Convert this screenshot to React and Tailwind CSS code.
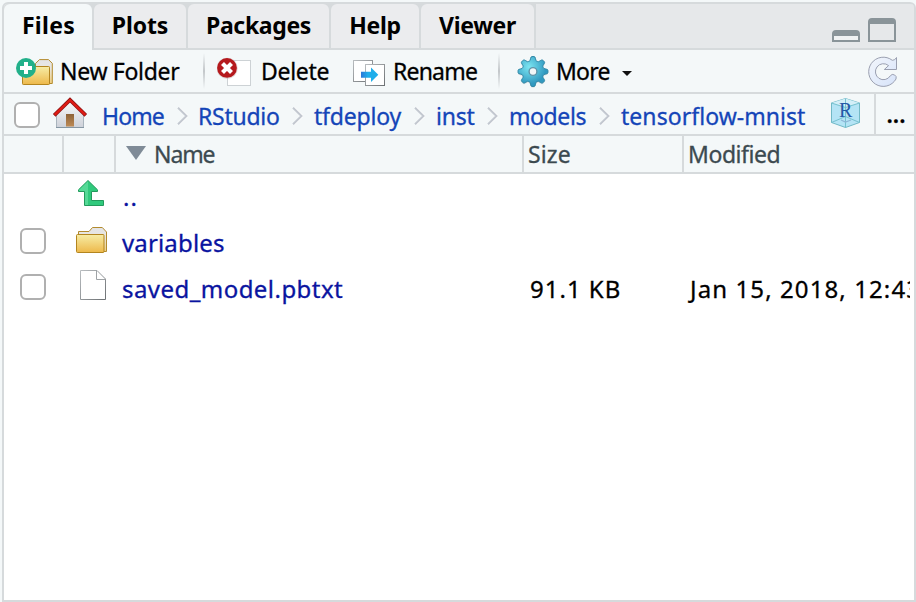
function Tab({ width, active, className = "", children }) {
  return (
    <div
      className={`flex items-center justify-center rounded-t-md text-center font-bold ${
        active ? "h-[46px] bg-[#f4f8f9] pb-1" : "h-11 bg-[#ebecee] pb-0.5"
      } ${width} ${className}`}
    >
      {children}
    </div>
  );
}

function Separator({ className = "" }) {
  return (
    <div
      className={`h-9 w-0.5 shrink-0 bg-gradient-to-b from-[#f4f8f9] via-[#c3c7ca] to-[#f4f8f9] ${className}`}
    />
  );
}

function Checkbox({ className = "" }) {
  return (
    <div
      className={`size-[26px] shrink-0 rounded-[6px] border-2 border-[#b0b0b0] bg-white ${className}`}
    />
  );
}

function Gradients() {
  return (
    <svg width="0" height="0" className="absolute" aria-hidden="true">
      <defs>
        <linearGradient id="folder" x1="0" y1="0" x2="0" y2="1">
          <stop offset="0" stopColor="#f7eda6" />
          <stop offset="1" stopColor="#edb84a" />
        </linearGradient>
        <linearGradient id="folderBack" x1="0" y1="0" x2="0" y2="1">
          <stop offset="0" stopColor="#e4e4e6" />
          <stop offset="0.35" stopColor="#e8e6e2" />
          <stop offset="1" stopColor="#f0cf80" />
        </linearGradient>
        <linearGradient id="page" x1="0" y1="0" x2="1" y2="1">
          <stop offset="0" stopColor="#b9bdc0" />
          <stop offset="1" stopColor="#6d7174" />
        </linearGradient>
        <radialGradient id="gear" gradientUnits="userSpaceOnUse" cx="528" cy="67" r="17">
          <stop offset="0" stopColor="#7de6f2" />
          <stop offset="1" stopColor="#3199c0" />
        </radialGradient>
        <linearGradient id="rename" x1="0" y1="0" x2="1" y2="0">
          <stop offset="0" stopColor="#2b78d8" />
          <stop offset="0.4" stopColor="#20aeea" />
          <stop offset="1" stopColor="#20aeea" />
        </linearGradient>
        <linearGradient id="refresh" x1="0" y1="0" x2="1" y2="1">
          <stop offset="0" stopColor="#f3f6fb" />
          <stop offset="1" stopColor="#d6e3fa" />
        </linearGradient>
        <linearGradient id="wall" x1="0" y1="0" x2="0" y2="1">
          <stop offset="0" stopColor="#fafafa" />
          <stop offset="1" stopColor="#cdd1d9" />
        </linearGradient>
        <linearGradient id="door" x1="0" y1="0" x2="0" y2="1">
          <stop offset="0" stopColor="#8d6238" />
          <stop offset="1" stopColor="#bd8a55" />
        </linearGradient>
      </defs>
    </svg>
  );
}

function NewFolderIcon() {
  return (
    <svg className="ml-3 shrink-0" width="38" height="42" viewBox="16 50 38 42">
      <path d="M35.5 66V63.5L39.5 59.6H48.5L52.3 63.3V83.5H35.5Z" fill="url(#folderBack)" stroke="#b38b2e" />
      <rect x="22.5" y="66.5" width="27" height="18" rx="0.8" fill="url(#folder)" stroke="#b3851f" />
      <circle cx="26" cy="68" r="10" fill="#22b08a" />
      <path d="M26 62V74M20 68H32" stroke="#fff" strokeWidth="4" />
    </svg>
  );
}

function DeleteIcon() {
  return (
    <svg className="ml-3 shrink-0" width="35" height="42" viewBox="217 50 35 42">
      <rect x="227.5" y="60.5" width="23" height="25" fill="#fff" stroke="#cdd2d5" />
      <circle cx="227.2" cy="68.3" r="10.6" fill="#c9b5b5" opacity="0.5" />
      <circle cx="227" cy="67.9" r="9.9" fill="#b5191d" />
      <path d="M222.5 63.5L231.5 72.5M231.5 63.5L222.5 72.5" stroke="#fff" strokeWidth="4.2" />
    </svg>
  );
}

function RenameIcon() {
  return (
    <svg className="shrink-0" width="33" height="42" viewBox="353 50 33 42">
      <rect x="353.5" y="60.5" width="19" height="21" fill="#fff" stroke="url(#page)" />
      <rect x="365.5" y="64.5" width="19" height="21" fill="#fff" stroke="url(#page)" />
      <path d="M361 71.7H371V67.5L378.3 74.7L371 82V77.8H361Z" fill="url(#rename)" />
    </svg>
  );
}

/* Outline of an eight-toothed wheel with softly rounded teeth. */
function gearPath(cx, cy, outer, inner) {
  const points = [];
  for (let i = 0; i < 96; i++) {
    const a = (i / 96) * Math.PI * 2;
    const wave = Math.tanh(2.2 * Math.cos(8 * a)) / Math.tanh(2.2);
    const r = (outer + inner) / 2 + ((outer - inner) / 2) * wave;
    points.push(`${(cx + r * Math.sin(a)).toFixed(2)} ${(cy - r * Math.cos(a)).toFixed(2)}`);
  }
  return `M${points.join("L")}Z`;
}

function GearIcon() {
  return (
    <svg className="ml-[17px] shrink-0" width="32" height="42" viewBox="516 50 32 42">
      <path d={gearPath(532, 72.6, 15, 11)} fill="#b9c6cc" opacity="0.6" />
      <path d={gearPath(532, 71.5, 15, 11)} fill="url(#gear)" stroke="#2f87a6" strokeLinejoin="round" />
      <circle cx="532" cy="71.5" r="3.9" fill="#f1f6f8" stroke="#5f93a8" strokeWidth="1.4" />
    </svg>
  );
}

function RefreshIcon() {
  return (
    <svg className="mr-4 ml-auto shrink-0" width="30" height="42" viewBox="868 50 30 42">
      <path
        d="M896.5 57.5V69.5H884.3L888.6 65.6A8 8 0 1 0 890.3 75.8A3.3 3.3 0 0 1 896 79A14.6 14.6 0 1 1 892.3 60.3Q895 60.5 896.5 57.5Z"
        fill="url(#refresh)"
        stroke="#9a9fb0"
      />
    </svg>
  );
}

function HomeIcon() {
  return (
    <svg className="ml-3 shrink-0" width="36" height="40" viewBox="52 94 36 40">
      <path d="M56.5 114L70 101L83.5 114V127.5H56.5Z" fill="url(#wall)" stroke="#a9b4bd" />
      <path d="M56 127.5H84" stroke="#8596a3" />
      <rect x="66" y="114" width="8" height="12.5" fill="url(#door)" />
      <path d="M54.2 115.3L70 100L85.8 115.3" fill="none" stroke="#8e1414" strokeWidth="3.8" />
      <path d="M54.7 114.9L70 100L85.3 114.9" fill="none" stroke="#e01b14" strokeWidth="2.2" />
    </svg>
  );
}

function ProjectIcon() {
  return (
    <svg className="shrink-0" width="30" height="40" viewBox="831 94 30 40">
      <path d="M845.5 98.5L859.5 103V122.5L845.5 127.5L831.5 122.5V103Z" fill="#b4e4f5" stroke="#72b9c6" />
      <path d="M845.5 98.5L859.5 103L845.5 107.5L831.5 103Z" fill="#d3eff8" />
      <path d="M831.5 103L845.5 107.5L859.5 103M845.5 98.5V127.5M831.5 122.5L845.5 116.5L859.5 122.5" fill="none" stroke="#6dbcca" strokeWidth="0.9" />
      <path d="M841 120L845.5 122L851 120" fill="none" stroke="#8fb6d6" strokeWidth="1.2" />
      <text x="839" y="117" fontSize="20" fill="#2458a6" className="font-['Liberation_Serif',serif]">R</text>
    </svg>
  );
}

function Chevron() {
  return (
    <svg className="h-[18px] w-[11px] shrink-0" viewBox="0 0 11 18">
      <path d="M2.3 0.7L11 9L2.3 17.3" fill="none" stroke="#fff" strokeWidth="1.5" />
      <path d="M1 0.7L9.5 9L1 17.3" fill="none" stroke="#c3c8d0" strokeWidth="2" />
    </svg>
  );
}

function UpIcon() {
  return (
    <svg width="28" height="46" viewBox="78 174 28 46">
      <path d="M88 180.5L97.5 189.8V191.5H91.5V200.5H103.5V205.5H84.5V191.5H78.5V189.8Z" fill="#30c97c" stroke="#239a5c" />
      <path d="M88 181.3V205H85V191H79V190Z" fill="#55d996" />
    </svg>
  );
}

function FolderIcon() {
  return (
    <svg width="32" height="46" viewBox="76 220 32 46">
      <path d="M78.5 235V231.5H89L92.5 227.5H102.3L106.5 232V251.5H78.5Z" fill="url(#folderBack)" stroke="#b38b2e" />
      <rect x="76.5" y="234.5" width="27.5" height="18" rx="1" fill="url(#folder)" stroke="#b3851f" />
    </svg>
  );
}

function FileIcon() {
  return (
    <svg width="28" height="46" viewBox="80 266 28 46">
      <path d="M80.5 270.5H97L105.5 279V299.5H80.5Z" fill="#fff" stroke="url(#page)" />
      <path d="M96.5 270.5V279.5H105.5" fill="none" stroke="#9fa3a6" />
    </svg>
  );
}

function FileRow({ checkbox = true, icon, iconPad, name, nameClass = "", size, modified }) {
  return (
    <div className="flex h-[46px] items-center text-[24px]">
      <div className="w-[60px] shrink-0 pb-1 pl-4">{checkbox && <Checkbox />}</div>
      <div className={`w-[58px] shrink-0 ${iconPad}`}>{icon}</div>
      <div className={`w-[408px] shrink-0 text-[#0a14a0] ${nameClass}`}>{name}</div>
      <div className="w-[156px] shrink-0 tracking-[1px]">{size}</div>
      <div className="w-[224px] shrink-0 overflow-hidden pl-1 tracking-[1.1px]">{modified}</div>
    </div>
  );
}

export default function App() {
  return (
    <div className="h-[602px] w-[916px] overflow-hidden bg-[#f4f8f9] pt-0.5 pl-0.5 font-['Noto_Sans',sans-serif] text-[23px] leading-[32px] whitespace-nowrap text-black [-webkit-text-stroke:0.3px]">
      <Gradients />
      <div className="flex h-[600px] w-[914px] flex-col overflow-hidden rounded-t-md border-2 border-[#d6dadc] bg-white">
        <div className="flex h-[46px] shrink-0 gap-0.5 bg-[#d6dadc] [-webkit-text-stroke:0px]">
          <Tab active width="w-[88px]" className="pl-px tracking-[0.3px]">Files</Tab>
          <Tab width="w-[92px]" className="tracking-[-0.1px]">Plots</Tab>
          <Tab width="w-[141px]" className="tracking-[-0.35px]">Packages</Tab>
          <Tab width="w-[88px]" className="tracking-[-0.3px]">Help</Tab>
          <Tab width="w-[113px]" className="tracking-[-0.3px]">Viewer</Tab>
          <div className="flex h-11 flex-1 items-end justify-end gap-2 bg-[#e6e8ea] pr-[18px] pb-1.5">
            <div className="h-3 w-7 rounded-t border-2 border-t-6 border-[#8a9499] bg-[#f0f2f3]" />
            <div className="h-6 w-7 rounded-t border-2 border-t-6 border-[#8a9499]" />
          </div>
        </div>

        <div className="flex h-11 shrink-0 items-center border-b-2 border-[#d6dadc] bg-[#f4f8f9]">
          <NewFolderIcon />
          <div className="ml-[6px] w-[143px] shrink-0 tracking-[-0.3px]">New Folder</div>
          <Separator />
          <DeleteIcon />
          <div className="ml-[9px] w-[92px] shrink-0 tracking-[-0.3px]">Delete</div>
          <RenameIcon />
          <div className="ml-[7px] w-[105px] shrink-0 tracking-[-0.8px]">Rename</div>
          <Separator />
          <GearIcon />
          <div className="ml-[7px] w-[66px] shrink-0 tracking-[-0.8px]">More</div>
          <svg className="mt-1 h-[5px] w-[10px] shrink-0" viewBox="0 0 10 5">
            <path d="M0 0H10L5 5Z" fill="#111" />
          </svg>
          <RefreshIcon />
        </div>

        <div className="flex h-[42px] shrink-0 items-center border-b-2 border-[#d6dadc] bg-[#f4f8f9] text-[#1445b8]">
          <Checkbox className="mt-0.5 ml-2.5" />
          <HomeIcon />
          <div className="flex w-[743px] items-center pt-1">
            <div className="ml-[14px] w-[75px] shrink-0 tracking-[-0.9px]">Home</div>
            <Chevron />
            <div className="ml-[10px] w-[94px] shrink-0 tracking-[-0.25px]">RStudio</div>
            <Chevron />
            <div className="ml-[11px] w-[100px] shrink-0 tracking-[-0.2px]">tfdeploy</div>
            <Chevron />
            <div className="ml-[11px] w-[51px] shrink-0 tracking-[-0.2px]">inst</div>
            <Chevron />
            <div className="ml-[11px] w-[90px] shrink-0 tracking-[-0.4px]">models</div>
            <Chevron />
            <div className="ml-[11px] shrink-0 tracking-[0.05px]">tensorflow-mnist</div>
          </div>
          <ProjectIcon />
          <div className="ml-auto flex h-10 w-10 shrink-0 items-center justify-center border-l-2 border-[#d6dadc] pl-0.5 font-semibold text-black">
            ...
          </div>
        </div>

        <div className="flex h-[38px] shrink-0 border-b-2 border-[#d6dadc] bg-[#f4f8f9] leading-[36px] text-[#3c4a50]">
          <div className="w-[60px] shrink-0 border-r-2 border-[#d6dadc]" />
          <div className="w-[52px] shrink-0 border-r-2 border-[#d6dadc]" />
          <div className="flex w-[408px] shrink-0 items-center border-r-2 border-[#d6dadc] pl-2.5">
            <svg className="mb-0.5 h-[14px] w-5 shrink-0" viewBox="0 0 20 14">
              <path d="M0 0H20L10 14Z" fill="#7f8b97" />
            </svg>
            <div className="ml-2 tracking-[-1.1px]">Name</div>
          </div>
          <div className="w-40 shrink-0 border-r-2 border-[#d6dadc] pl-1 tracking-[0.1px]">Size</div>
          <div className="pl-1 tracking-[-0.45px]">Modified</div>
        </div>

        <FileRow checkbox={false} icon={<UpIcon />} iconPad="pl-3.5" name=".." nameClass="tracking-[1px] pl-px" />
        <FileRow icon={<FolderIcon />} iconPad="pl-3" name="variables" nameClass="tracking-[0.15px]" />
        <FileRow
          icon={<FileIcon />}
          iconPad="pl-4"
          name="saved_model.pbtxt"
          nameClass="tracking-[0.45px]"
          size="91.1 KB"
          modified="Jan 15, 2018, 12:43"
        />
      </div>
    </div>
  );
}
